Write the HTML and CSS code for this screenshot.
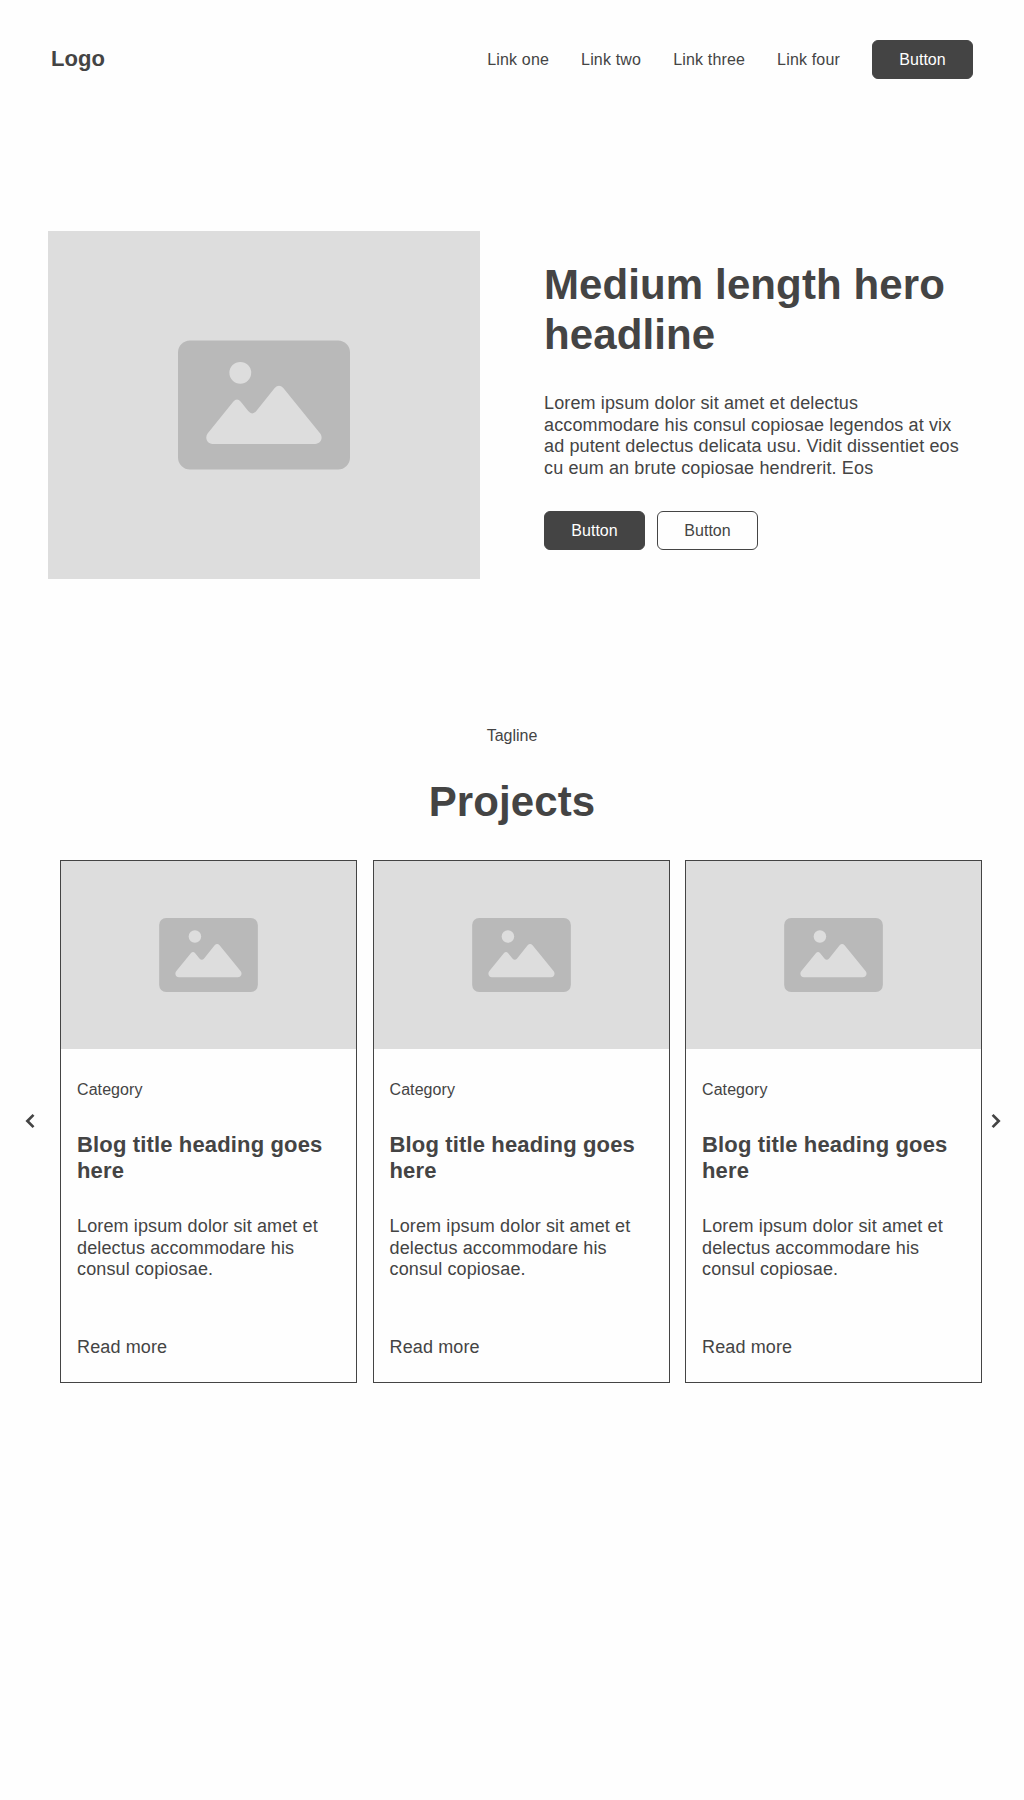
FILE: index.html
```html
<!DOCTYPE html>
<html lang="en">
<head>
<meta charset="utf-8">
<title>Projects</title>
<link rel="stylesheet" href="styles.css">
</head>
<body>
<svg class="sprite" aria-hidden="true">
  <symbol id="picture" viewBox="0 0 172 129">
    <rect class="picture-frame" width="172" height="129" rx="12"/>
    <circle class="picture-shape" cx="62.3" cy="32.3" r="10.9"/>
    <path class="picture-shape" d="M34.5 103.4H137.2C142.6 103.4 145.5 97.4 142.2 93L105.3 47.4Q101 43 96.7 47.4L78.3 70.5Q74.3 75.3 70.2 70.5L62.8 61.3Q59 56.9 55.2 61.3L29.6 93C26.5 97.4 29.2 103.4 34.5 103.4Z"/>
  </symbol>
</svg>

<header class="header">
  <div class="logo">Logo</div>
  <nav class="nav">
    <a class="nav-link">Link one</a>
    <a class="nav-link">Link two</a>
    <a class="nav-link">Link three</a>
    <a class="nav-link">Link four</a>
    <a class="button button-primary">Button</a>
  </nav>
</header>

<section class="hero">
  <div class="hero-image"><svg class="hero-picture"><use href="#picture"/></svg></div>
  <div class="hero-content">
    <h1 class="heading">Medium length hero headline</h1>
    <p class="text hero-text">Lorem ipsum dolor sit amet et delectus accommodare his consul copiosae legendos at vix ad putent delectus delicata usu. Vidit dissentiet eos cu eum an brute copiosae hendrerit. Eos</p>
    <div class="actions">
      <a class="button button-primary">Button</a>
      <a class="button button-outline">Button</a>
    </div>
  </div>
</section>

<section class="projects">
  <p class="tagline">Tagline</p>
  <h2 class="heading">Projects</h2>
  <div class="carousel">
    <svg class="arrow arrow-previous" viewBox="0 0 28 28"><path d="M17.5 7.9L11.4 14l6.1 6.1"/></svg>
    <div class="cards">
      <article class="card">
        <div class="card-image"><svg class="card-picture"><use href="#picture"/></svg></div>
        <div class="card-body">
          <p class="category">Category</p>
          <h3 class="card-title">Blog title heading goes here</h3>
          <p class="text">Lorem ipsum dolor sit amet et delectus accommodare his consul copiosae.</p>
          <a class="text read-more">Read more</a>
        </div>
      </article>
      <article class="card">
        <div class="card-image"><svg class="card-picture"><use href="#picture"/></svg></div>
        <div class="card-body">
          <p class="category">Category</p>
          <h3 class="card-title">Blog title heading goes here</h3>
          <p class="text">Lorem ipsum dolor sit amet et delectus accommodare his consul copiosae.</p>
          <a class="text read-more">Read more</a>
        </div>
      </article>
      <article class="card">
        <div class="card-image"><svg class="card-picture"><use href="#picture"/></svg></div>
        <div class="card-body">
          <p class="category">Category</p>
          <h3 class="card-title">Blog title heading goes here</h3>
          <p class="text">Lorem ipsum dolor sit amet et delectus accommodare his consul copiosae.</p>
          <a class="text read-more">Read more</a>
        </div>
      </article>
    </div>
    <svg class="arrow" viewBox="0 0 28 28"><path d="M10.6 7.9L16.7 14l-6.1 6.1"/></svg>
  </div>
</section>
</body>
</html>
```
FILE: styles.css
```css
* {
  box-sizing: border-box;
  margin: 0;
}

body {
  min-height: 1800px;
  background: #fefefe;
  color: #444;
  font: 16px/1.2 "Liberation Sans", Arial, sans-serif;
}

.sprite {
  display: none;
}

.picture-frame {
  fill: #b9b9b9;
}

.picture-shape {
  fill: #ddd;
}

.header {
  display: flex;
  align-items: center;
  justify-content: space-between;
  height: 119px;
  padding: 0 51px;
}

.logo {
  padding-bottom: 1.6px;
  font-size: 22px;
  font-weight: 700;
  letter-spacing: 0.1px;
}

.nav {
  display: flex;
  align-items: center;
  gap: 32px;
}

.nav-link {
  letter-spacing: 0.17px;
}

.button {
  display: flex;
  align-items: center;
  justify-content: center;
  width: 101px;
  height: 39px;
  border: 1px solid #444;
  border-radius: 6px;
}

.button-primary {
  background: #444;
  color: #fff;
}

.hero {
  display: grid;
  grid-template-columns: 432px 432px;
  gap: 64px;
  align-items: center;
  padding: 112px 48px;
}

.hero-image,
.card-image {
  display: flex;
  align-items: center;
  justify-content: center;
  background: #ddd;
}

.hero-image {
  height: 348px;
}

.hero-picture {
  width: 172px;
  height: 130px;
}

.hero-content {
  display: flex;
  flex-direction: column;
  gap: 32px;
}

.heading {
  font-size: 42px;
  letter-spacing: 0.11px;
}

.text {
  font-size: 18px;
  letter-spacing: 0.13px;
}

.hero-text {
  margin: 0.3px 0 -0.3px;
}

.actions {
  display: flex;
  gap: 12px;
}

.projects {
  display: flex;
  flex-direction: column;
  align-items: center;
  gap: 32px;
  padding-top: 35px;
}

.carousel {
  display: flex;
  align-items: center;
  width: 100%;
  height: 523px;
  padding-left: 16px;
}

.arrow {
  width: 28px;
  height: 28px;
  fill: none;
  stroke: #444;
  stroke-width: 2.7;
}

.arrow-previous {
  margin-right: 16px;
}

.cards {
  display: flex;
  justify-content: space-between;
  width: 922px;
}

.card {
  width: 297px;
  height: 523px;
  border: 1px solid #444;
}

.card-image {
  height: 188px;
}

.card-picture {
  width: 99px;
  height: 74px;
}

.card-body {
  display: flex;
  flex-direction: column;
  gap: 32px;
  padding: 31.5px 16px;
}

.category {
  letter-spacing: 0.08px;
}

.card-title {
  margin: 0.3px 0 -0.3px;
  font-size: 22px;
  letter-spacing: 0.15px;
}

.read-more {
  padding-top: 24px;
}
```
